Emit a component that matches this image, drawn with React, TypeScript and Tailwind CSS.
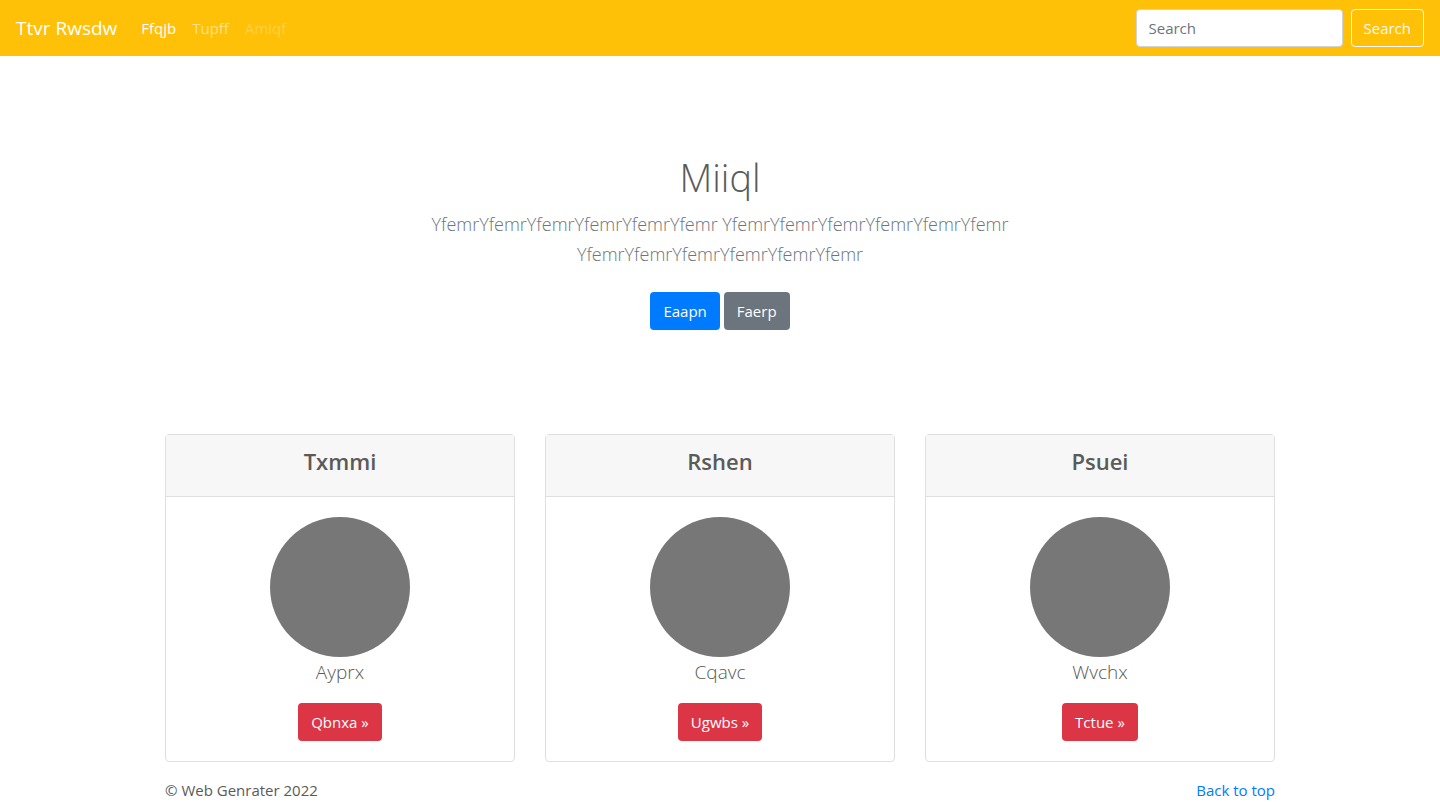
const cards = [
  { title: "Txmmi", text: "Ayprx", action: "Qbnxa" },
  { title: "Rshen", text: "Cqavc", action: "Ugwbs" },
  { title: "Psuei", text: "Wvchx", action: "Tctue" },
];

export default function App() {
  return (
    <div id="top" className="bg-white font-['Open_Sans','Noto_Sans',sans-serif] text-[15px] leading-6 text-[#5a5a5a]">
      <nav className="flex flex-wrap items-center bg-[#ffc107] px-4 py-2">
        <a href="#" className="mr-4 text-[19px] leading-[30px] text-white">Ttvr Rwsdw</a>
        <ul className="flex flex-1">
          <li className="px-2"><a href="#" className="text-white">Ffqjb</a></li>
          <li className="px-2"><a href="#" className="text-white/50">Tupff</a></li>
          <li className="px-2"><a href="#" className="text-white/25">Amiqf</a></li>
        </ul>
        <form className="flex gap-2 py-px" onSubmit={(e) => e.preventDefault()}>
          <input type="text" placeholder="Search" aria-label="Search" className="h-[38px] w-[207px] rounded border border-[#ced4da] bg-white px-3 placeholder:text-[#6c757d]" />
          <button type="submit" className="h-[38px] rounded border border-[#f8f9fa] px-3 text-[#f8f9fa]">Search</button>
        </form>
      </nav>
      <main>
        <section className="px-4 py-24 text-center">
          <h1 className="pt-px pb-2 text-[38px] leading-[48px] font-light">Miiql</h1>
          <p className="mx-auto mb-4 max-w-[610px] text-[18px] leading-[30px] font-light text-[#6c757d]">
            YfemrYfemrYfemrYfemrYfemrYfemr YfemrYfemrYfemrYfemrYfemrYfemr YfemrYfemrYfemrYfemrYfemrYfemr
          </p>
          <p className="flex justify-center gap-1 pt-[7px] pb-2">
            <a href="#" className="rounded bg-[#007bff] px-[13px] py-[7px] text-white">Eaapn</a>
            <a href="#" className="rounded bg-[#6c757d] px-[13px] py-[7px] text-white">Faerp</a>
          </p>
        </section>
        <section className="mx-auto grid max-w-[1110px] grid-cols-3 gap-[30px] text-center">
          {cards.map((c) => (
            <article key={c.title} className="rounded border border-[#dfdfdf]">
              <h2 className="border-b border-[#dfdfdf] bg-[#f7f7f7] px-5 pt-3 pb-5 text-[22px] leading-[29px] font-semibold">{c.title}</h2>
              <div className="p-5">
                <div className="mx-auto size-[140px] rounded-full bg-[#777]" />
                <p className="mb-4 text-[19px] leading-[30px] font-light">{c.text}</p>
                <a href="#" className="inline-block rounded bg-[#dc3545] px-[13px] py-[7px] align-top text-white">{c.action} »</a>
              </div>
            </article>
          ))}
        </section>
      </main>
      <footer className="mx-auto flex max-w-[1110px] justify-between pt-4">
        <p>© Web Genrater 2022</p>
        <a href="#top" className="text-[#007bff]">Back to top</a>
      </footer>
    </div>
  );
}
